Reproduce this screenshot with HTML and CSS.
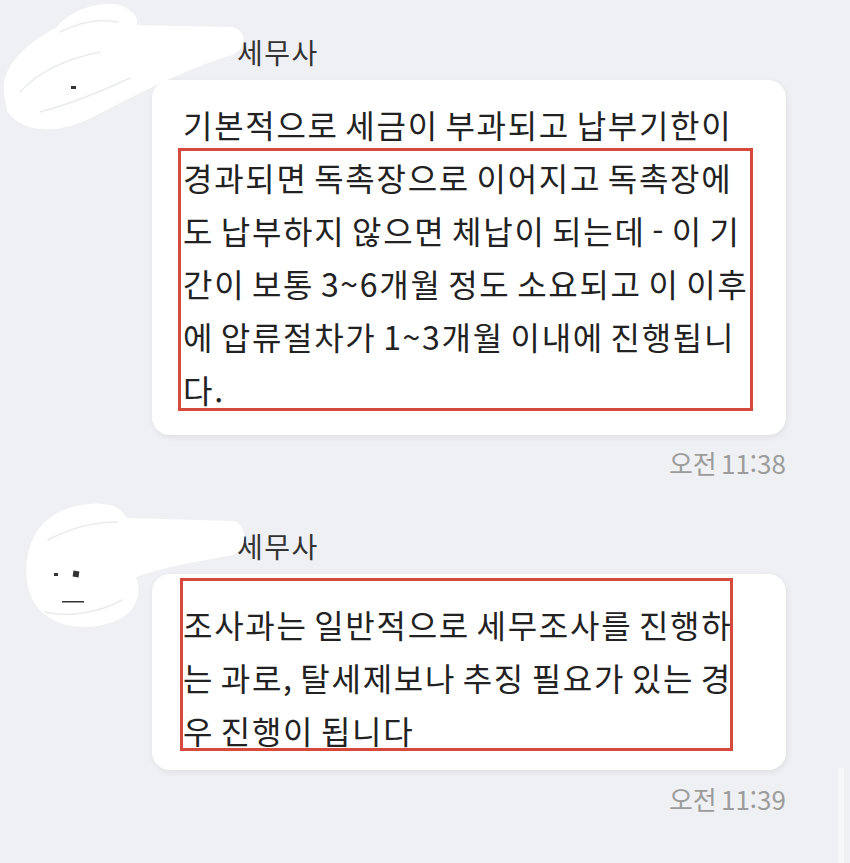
FILE: index.html
```html
<!DOCTYPE html>
<html lang="ko">
    <head>
        <meta charset="UTF-8">
        <meta name="viewport" content="width=device-width, initial-scale=1.0">
        <title>채팅</title>
        <link rel="stylesheet" href="styles.css">
    </head>
    <body>
        <div class="chat">
            <div class="msg">
                <div class="name">세무사</div>
                <div class="bubble bubble-first">
                    <span class="line">기본적으로 세금이 부과되고 납부기한이</span>
                    <div class="mark mark-first">
                        <span class="line">경과되면 독촉장으로 이어지고 독촉장에</span>
                        <span class="line">도 납부하지 않으면 체납이 되는데 - 이 기</span>
                        <span class="line">간이 보통 3~6개월 정도 소요되고 이 이후</span>
                        <span class="line">에 압류절차가 1~3개월 이내에 진행됩니</span>
                        <span class="line">다.</span>
                    </div>
                </div>
                <div class="time time-first">오전 11:38</div>
            </div>

            <div class="msg">
                <div class="name name-second">세무사</div>
                <div class="bubble bubble-second">
                    <div class="mark mark-second">
                        <span class="line">조사과는 일반적으로 세무조사를 진행하</span>
                        <span class="line">는 과로, 탈세제보나 추징 필요가 있는 경</span>
                        <span class="line">우 진행이 됩니다</span>
                    </div>
                </div>
                <div class="time time-second">오전 11:39</div>
            </div>
        </div>

        <!-- 이름/프로필 가린 낙서 -->
        <svg class="scribble" width="850" height="863" viewBox="0 0 850 863">
            <g fill="#fff" stroke="#fff" stroke-width="6" stroke-linejoin="round">
                <path d="M8,98 C0,70 28,46 58,30 C74,10 108,2 124,10 C136,17 136,24 131,28 L232,30 C244,33 243,47 231,52 C190,64 142,88 92,114 C62,130 26,132 10,110 Z"/>
                <path d="M36,600 C22,570 30,530 60,515 C80,505 110,503 120,514 L126,521 L234,524 C245,529 243,547 232,552 C190,560 152,566 132,576 C140,592 134,612 110,620 C80,629 50,623 36,600 Z"/>
            </g>
            <g fill="none" stroke="#e9ebee" stroke-width="1.5" stroke-linecap="round">
                <path d="M20,92 C40,70 70,58 100,52"/>
                <path d="M60,32 C80,22 100,18 118,22"/>
                <path d="M40,112 C70,104 100,92 130,78"/>
                <path d="M48,540 C70,528 95,522 118,522"/>
                <path d="M45,612 C70,618 100,612 122,600"/>
            </g>
            <g fill="#333">
                <rect x="73" y="571" width="6" height="6" transform="rotate(8 76 574)"/>
                <rect x="54" y="573" width="4" height="3"/>
                <rect x="62" y="601" width="22" height="1.5"/>
                <rect x="71" y="86" width="5" height="3"/>
            </g>
        </svg>
        <div class="scroll-track"></div>
    </body>
</html>
```

FILE: styles.css
```css
body {
    margin: 0;
    padding: 0;
    background-color: #eef0f3;
    font-family: "Noto Sans CJK KR", "Noto Sans", sans-serif;
    color: #222;
    width: 850px;
    height: 863px;
    overflow: hidden;
    position: relative;
}

.chat {
    padding-top: 33px;
}

.msg {
    margin-left: 152px;
    width: 634px;
}

.name {
    font-size: 28px;
    line-height: 38px;
    letter-spacing: 1.5px;
    color: #333;
    margin-left: 85px;
    margin-bottom: 9px;
}
.name-second {
    margin-top: 49px;
}

.bubble {
    background-color: #fff;
    border-radius: 18px;
    box-shadow: 1px 2px 6px rgba(0, 0, 0, 0.07);
    padding: 0 31px;
    font-size: 32px;
    line-height: 53px;
    letter-spacing: 1.7px;
    word-spacing: -4px;
}
.bubble-first {
    padding-top: 18px;
    padding-bottom: 24px;
}
.bubble-second {
    padding-top: 4px;
    padding-bottom: 19px;
}

.line {
    display: block;
    white-space: nowrap;
}

.mark {
    border: 3px solid #d8493d;
}
.mark-first {
    margin: -3px 2px 0 -5px;
    padding-left: 2px;
    height: 257px;
}
.mark-second {
    margin: 0 22px 0 -3px;
    padding-top: 17px;
    height: 150px;
}

.time {
    text-align: right;
    font-size: 26px;
    line-height: 30px;
    color: #9c9c9c;
    word-spacing: -3px;
}
.time-first {
    margin-top: 13px;
}
.time-second {
    margin-top: 14px;
}

.scribble {
    position: absolute;
    top: 0;
    left: 0;
    pointer-events: none;
}

.scroll-track {
    position: absolute;
    right: 6px;
    top: 768px;
    bottom: 0;
    width: 6px;
    background-color: rgba(255, 255, 255, 0.45);
}
```
